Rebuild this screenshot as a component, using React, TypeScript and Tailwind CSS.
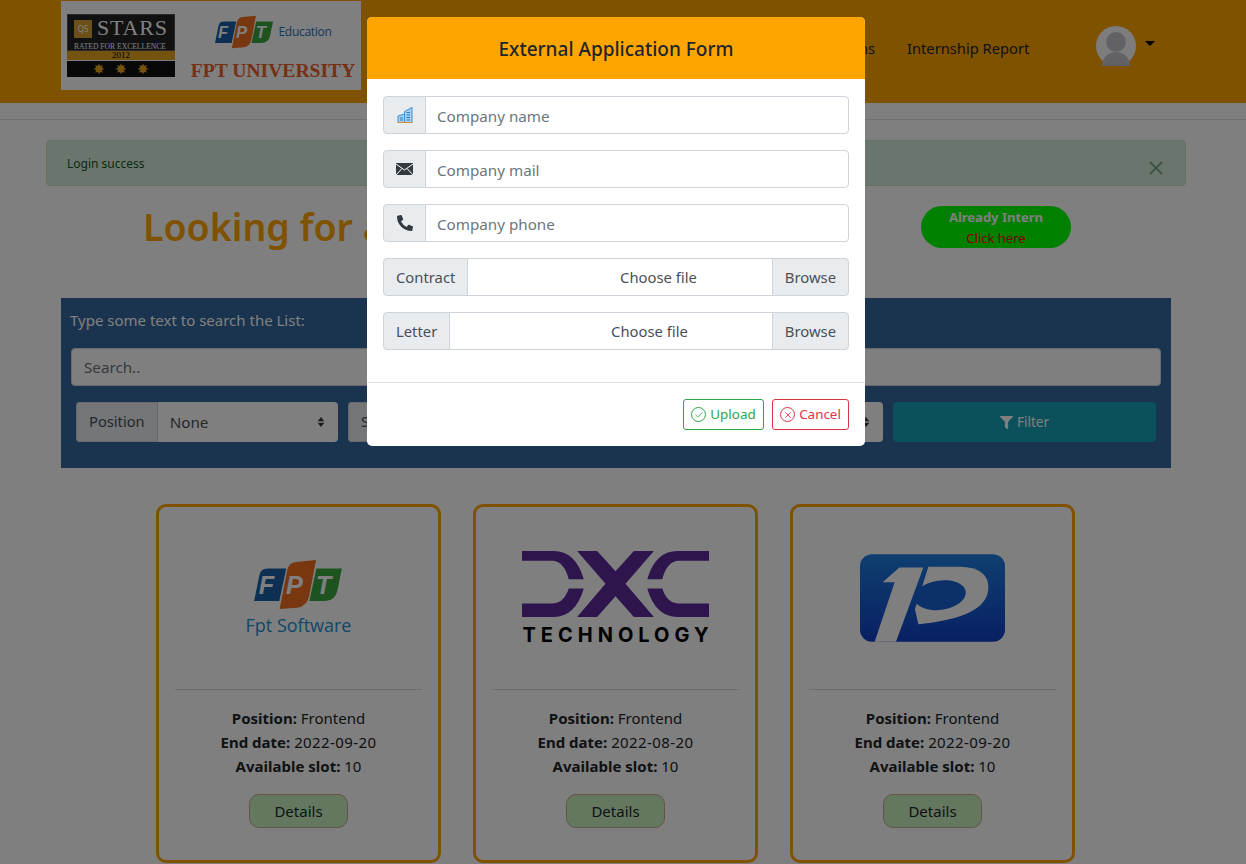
import { Check, X } from "lucide-react";
import { FaFilter, FaPhoneAlt } from "react-icons/fa";

const font = "font-['Noto_Sans','Open_Sans',sans-serif]";

function FptMark({ className }: { className?: string }) {
  return (
    <svg viewBox="0 0 265 148" className={className}>
      <path d="M0 124 L16 46 Q20 26 40 26 H97 L76 124 Z" fill="#1a5fa8" />
      <path d="M77 148 L100 30 Q106 8 126 6 L187 0 L166 110 Q158 140 130 144 Z" fill="#f26f21" />
      <path d="M167 124 L188 26 H265 L252 90 Q246 124 210 124 Z" fill="#3aa63f" />
      <g fill="#fff" fontFamily="Liberation Sans, sans-serif" fontStyle="italic" fontWeight="700" fontSize="76">
        <text x="14" y="102">F</text>
        <text x="96" y="102">P</text>
        <text x="186" y="102">T</text>
      </g>
    </svg>
  );
}

function StarsBadge() {
  return (
    <div className="flex w-[108px] flex-col">
      <div className="flex h-[37px] flex-col border border-[#555] bg-[#222] px-[6px] pt-[4px]">
        <div className="flex items-center gap-[5px]">
          <div className="flex h-[18px] w-[18px] items-center justify-center bg-[#d9a030] text-[8px] text-white">QS</div>
          <span className="mb-[2px] font-['Liberation_Serif',serif] text-[22px] leading-[18px] tracking-[0.8px] text-white">STARS</span>
        </div>
        <span className="mt-[3px] font-['Liberation_Serif',serif] text-[7.6px] leading-[9px] whitespace-nowrap text-white">RATED FOR EXCELLENCE</span>
      </div>
      <div className="h-[9px] bg-[#e8a620] text-center font-['Liberation_Serif',serif] text-[9px] leading-[9px] text-black">2012</div>
      <div className="mt-px flex h-[16px] items-center justify-center gap-[10px] bg-[#111] text-[14px] leading-none text-[#e8a620]">
        <span>✸</span>
        <span>✸</span>
        <span>✸</span>
      </div>
    </div>
  );
}

function UniLogo() {
  return (
    <div className="flex h-[89px] w-[300px] items-start gap-[16px] bg-white pt-[13px] pl-[6px]">
      <StarsBadge />
      <div className="flex w-[164px] flex-col items-center">
        <div className="flex items-center gap-[6px]">
          <FptMark className="h-[36px] w-[58px]" />
          <span className="font-['Open_Sans',sans-serif] text-[12px] tracking-[-0.3px] text-[#1a72b8]">Education</span>
        </div>
        <span className="mt-[10px] font-['Liberation_Serif',serif] text-[19.6px] leading-[22px] font-bold whitespace-nowrap text-[#e8622a]">FPT UNIVERSITY</span>
      </div>
    </div>
  );
}

function FptSoftwareLogo() {
  return (
    <div className="flex flex-col items-center">
      <FptMark className="h-[49px] w-[88px]" />
      <span className="mt-[5px] font-['Open_Sans',sans-serif] text-[18px] leading-[22px] text-[#1f8fd0]">Fpt Software</span>
    </div>
  );
}

function DxcLogo() {
  return (
    <div className="flex flex-col items-center">
      <svg viewBox="0 0 560 197" className="h-[66px] w-[187px]">
        <path d="M0 0 H95 Q160 0 185 84 H140 Q125 29 90 29 H0 Z" fill="#5f2b9c" />
        <path d="M0 197 H95 Q160 197 185 112 H140 Q125 157 90 157 H0 Z" fill="#5f2b9c" />
        <path d="M165 0 H225 L280 60 L335 0 H395 L310 98 L395 197 H335 L280 135 L225 197 H165 L250 98 Z" fill="#5f2b9c" />
        <path d="M560 0 H465 Q400 0 375 84 H420 Q435 29 470 29 H560 Z" fill="#5f2b9c" />
        <path d="M560 197 H465 Q400 197 375 112 H420 Q435 157 470 157 H560 Z" fill="#5f2b9c" />
      </svg>
      <span className="mt-[7px] pl-[5px] font-['Inter',sans-serif] text-[20px] leading-[22px] font-bold tracking-[5px] whitespace-nowrap text-black">TECHNOLOGY</span>
    </div>
  );
}

function TenPLogo() {
  return (
    <svg viewBox="0 0 435 263" className="h-[88px] w-[145px]">
      <defs>
        <linearGradient id="tenp" x1="0" y1="0" x2="0" y2="1">
          <stop offset="0" stopColor="#1f7fe0" />
          <stop offset="1" stopColor="#1240c8" />
        </linearGradient>
      </defs>
      <rect x="0" y="0" width="435" height="263" rx="36" fill="url(#tenp)" />
      <path d="M68 84 L118 40 H190 L108 263 H44 L104 84 Z" fill="#fff" />
      <path d="M205 38 H300 Q385 40 385 100 Q385 190 175 210 L165 165 Z" fill="#fff" />
      <ellipse cx="240" cy="123" rx="78" ry="44" transform="rotate(-8 240 123)" fill="#1860d4" />
    </svg>
  );
}

function CompanyCard({ logo, endDate }: { logo: React.ReactNode; endDate: string }) {
  return (
    <div className="flex h-[359px] w-[285px] flex-col rounded-[10px] border-[3px] border-[#ffa500] px-[16px]">
      <div className="flex h-[182px] items-center justify-center">{logo}</div>
      <div className="border-t border-[#ddd] pt-[16px] text-center text-[15px] leading-[24px] text-[#212529]">
        <p><b className="font-bold">Position:</b> Frontend</p>
        <p><b className="font-bold">End date:</b> <span className="tracking-[0.4px]">{endDate}</span></p>
        <p><b className="font-bold">Available slot:</b> 10</p>
        <button className="mt-[16px] h-[34px] w-[99px] rounded-[10px] border border-[#c8a888] bg-[#c8f0c0] text-[15px] text-[#212529]">Details</button>
      </div>
    </div>
  );
}

function SelectArrows() {
  return (
    <svg viewBox="0 0 8 12" className="h-[10px] w-[8px]">
      <path d="M4 0 L8 5 H0 Z M0 7 H8 L4 12 Z" fill="#343a40" />
    </svg>
  );
}

function BuildingIcon() {
  return (
    <svg viewBox="0 0 16 16" className="h-[16px] w-[16px]">
      <path d="M7.5 15.5 V4.5 L15 0.5 V15.5 Z" fill="#a8cff0" stroke="#3f8fd0" strokeWidth="1" />
      <path d="M1 15.5 V9 L7.5 7 V15.5 Z" fill="#a8cff0" stroke="#3f8fd0" strokeWidth="1" />
      <path d="M3 11 H6 M3 13 H6 M9.5 5.5 H13 M9.5 8 H13 M9.5 10.5 H13 M9.5 13 H13" stroke="#2f78b8" strokeWidth="1" />
      <path d="M0.5 15.5 H15.5" stroke="#d98b3a" strokeWidth="1" />
    </svg>
  );
}

function EnvelopeIcon() {
  return (
    <svg viewBox="0 0 17 12" className="h-[12px] w-[17px]">
      <rect width="17" height="12" fill="#343a40" />
      <path d="M0 1 L8.5 7 L17 1 M0 12 L6 5.5 M17 12 L11 5.5" fill="none" stroke="#fff" strokeWidth="1" />
    </svg>
  );
}

function AvatarIcon() {
  return (
    <svg viewBox="0 0 40 40" className="h-[40px] w-[40px]">
      <circle cx="20" cy="20" r="20" fill="#fbfbfb" />
      <circle cx="20" cy="16" r="10" fill="#c5c5cc" />
      <ellipse cx="20" cy="40" rx="14" ry="14" fill="#c5c5cc" />
    </svg>
  );
}

function IconField({ icon, placeholder }: { icon: React.ReactNode; placeholder: string }) {
  return (
    <div className="flex h-[38px]">
      <div className="flex w-[43px] items-center justify-center rounded-l-[4px] border border-[#ced4da] bg-[#e9ecef] text-[#343a40]">{icon}</div>
      <div className="-ml-px flex flex-1 items-center rounded-r-[4px] border border-[#ced4da] bg-white px-[11px] pt-[2px] text-[#6c757d]">{placeholder}</div>
    </div>
  );
}

function FileField({ label }: { label: string }) {
  return (
    <div className="flex h-[38px] text-[14.8px] text-[#495057]">
      <div className="flex items-center rounded-l-[4px] border border-[#ced4da] bg-[#e9ecef] px-[12px]">{label}</div>
      <div className="-ml-px flex min-w-0 flex-1 items-center justify-end border border-[#ced4da] bg-white">
        <span className="w-1/2 whitespace-nowrap">Choose file</span>
      </div>
      <div className="-ml-px flex items-center rounded-r-[4px] border border-[#ced4da] bg-[#e9ecef] px-[12px]">Browse</div>
    </div>
  );
}

export default function App() {
  return (
    <div className={`relative h-screen overflow-hidden bg-white text-[15px] ${font}`}>
      <header className="flex h-[103px] bg-[#ffa500] pt-px pl-[61px]">
        <UniLogo />
        <nav className="ml-[416px] flex h-[94px] items-center gap-[32px] text-[14.7px] text-[#212529]">
          <span className="w-[98px] text-right">Applications</span>
          <span>Internship Report</span>
        </nav>
        <div className="ml-[67px] flex h-fit items-start pt-[25px]">
          <AvatarIcon />
          <div className="mt-[15px] ml-[9px] h-0 w-0 border-x-[5px] border-t-[5px] border-x-transparent border-t-black" />
        </div>
      </header>

      <hr className="mt-[16px] border-[#ddd]" />

      <div className="w-[1232px]">
        <div className="mx-[46px] mt-[20px] flex h-[46px] items-center justify-between rounded-[4px] border border-[#c3e6cb] bg-[#d4edda] pr-[18px] pl-[20px] text-[12px] text-[#155724]">
          <span className="pt-[2px]">Login success</span>
          <X className="mt-[10px] h-[22px] w-[22px] text-[#7fa88c]" strokeWidth={2.2} />
        </div>

        <div className="mt-[20px] flex h-[42px] items-center pl-[143px]">
          <h1 className="w-[778px] text-[37.5px] leading-[44px] font-semibold text-[#ffa500]">Looking for a</h1>
          <button className="flex h-[42px] w-[150px] flex-col items-center justify-center rounded-[21px] bg-[#00ff00] pt-[2px] text-[13px] leading-[21px]">
            <b className="font-bold text-white">Already Intern</b>
            <span className="text-[#ff0000]">Click here</span>
          </button>
        </div>

        <section className="mx-[61px] mt-[50px] h-[170px] bg-[#34669e] px-[10px] pt-[12px]">
          <p className="-ml-px leading-[20px] text-white">Type some text to search the List:</p>
          <div className="mt-[18px] flex h-[38px] items-center rounded-[4px] border border-[#ced4da] bg-white px-[12px] pt-px text-[15.2px] text-[#6c757d]">Search..</div>
          <div className="mt-[16px] flex h-[40px] gap-[10px] px-[5px]">
            <div className="flex w-[262px] rounded-[4px] bg-white">
              <div className="flex items-center rounded-l-[4px] border border-[#ced4da] bg-[#e9ecef] px-[12px] pb-px text-[14.7px] text-[#495057]">Position</div>
              <div className="flex flex-1 items-center justify-between pr-[13px] pl-[12px] text-[15.2px] text-[#495057]">
                <span className="pt-px">None</span>
                <SelectArrows />
              </div>
            </div>
            <div className="flex w-[535px] rounded-[4px] bg-white">
              <div className="flex items-center rounded-l-[4px] border border-[#ced4da] bg-[#e9ecef] px-[12px] pb-px text-[14.7px] text-[#495057]">Salary</div>
              <div className="flex flex-1 items-center justify-end pr-[13px]">
                <SelectArrows />
              </div>
            </div>
            <button className="flex flex-1 items-center justify-center gap-[4px] rounded-[4px] bg-[#17a2b8] text-[13.5px] text-white">
              <FaFilter className="h-[13px] w-[13px]" />
              Filter
            </button>
          </div>
        </section>

        <div className="mt-[36px] ml-[156px] flex gap-[32px]">
          <CompanyCard logo={<FptSoftwareLogo />} endDate="2022-09-20" />
          <CompanyCard logo={<DxcLogo />} endDate="2022-08-20" />
          <CompanyCard logo={<TenPLogo />} endDate="2022-09-20" />
        </div>
      </div>

      <div className="absolute inset-0 bg-black/50" />

      <div className="absolute top-[17px] left-[367px] w-[498px] overflow-hidden rounded-[5px] bg-white text-[15.2px]">
        <div className="flex h-[62px] items-center justify-center bg-[#ffa500] pt-[2px] text-[19px] font-medium text-[#212529]">External Application Form</div>
        <div className="flex flex-col gap-[16px] px-[16px] pt-[17px] pb-[32px]">
          <IconField icon={<BuildingIcon />} placeholder="Company name" />
          <IconField icon={<EnvelopeIcon />} placeholder="Company mail" />
          <IconField icon={<FaPhoneAlt className="h-[16px] w-[16px]" />} placeholder="Company phone" />
          <FileField label="Contract" />
          <FileField label="Letter" />
        </div>
        <div className="flex h-[64px] items-center justify-end gap-[8px] border-t border-[#dee2e6] pr-[16px] text-[13.4px]">
          <button className="flex h-[31px] w-[81px] items-center justify-center gap-[4px] rounded-[3px] border border-[#28a745] text-[#28a745]">
            <span className="flex h-[15px] w-[15px] items-center justify-center rounded-full border border-[#28a745]">
              <Check className="h-[10px] w-[10px]" />
            </span>
            Upload
          </button>
          <button className="flex h-[31px] w-[77px] items-center justify-center gap-[4px] rounded-[3px] border border-[#dc3545] text-[#dc3545]">
            <span className="flex h-[15px] w-[15px] items-center justify-center rounded-full border border-[#dc3545]">
              <X className="h-[10px] w-[10px]" />
            </span>
            Cancel
          </button>
        </div>
      </div>
    </div>
  );
}
